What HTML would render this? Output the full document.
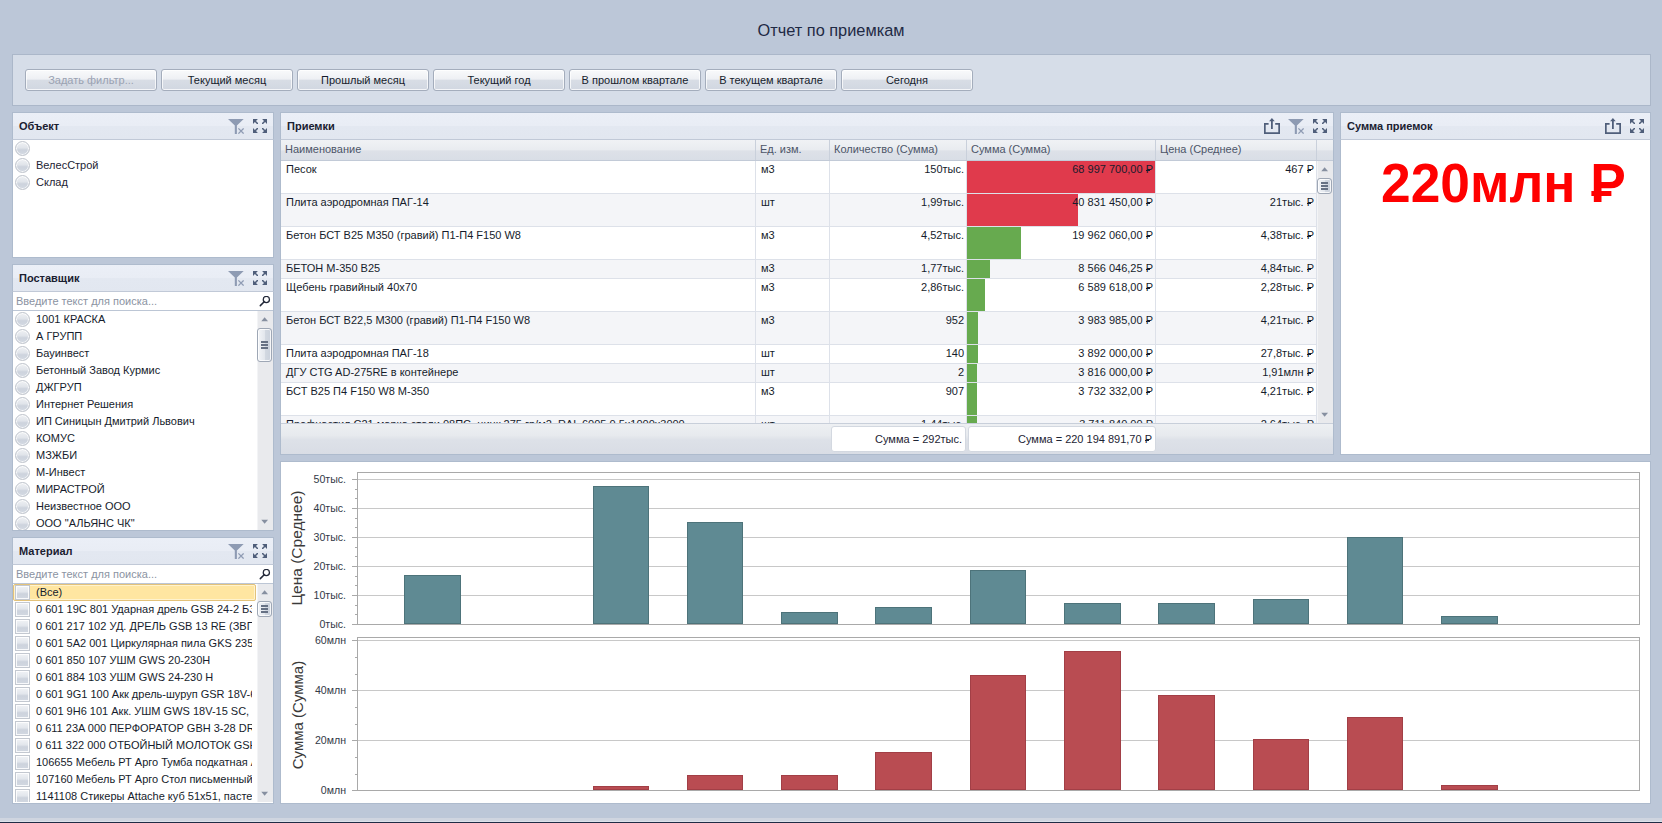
<!DOCTYPE html><html><head><meta charset="utf-8"><style>
*{margin:0;padding:0}
html,body{width:1662px;height:823px;overflow:hidden;background:#bcc7d8;font-family:"Liberation Sans", sans-serif}
body>div,body>svg,.clip>div,.clip>svg{position:absolute}
.clip{overflow:hidden}
.t{white-space:nowrap}
.btn{box-sizing:border-box;border:1px solid #a4adbc;border-radius:3px;box-shadow:inset 0 0 0 1px rgba(255,255,255,.75);background:linear-gradient(#f9fafb 0%,#eef0f4 45%,#d8dde5 52%,#d1d7e1 100%)}
.w{box-sizing:border-box;border:1px solid #aebbcd;background:#fff}
.wh{box-sizing:border-box;border:1px solid #aebbcd;border-bottom:1px solid #c1c9d7;background:linear-gradient(#ebeff7 0%,#e9edf5 48%,#e3e8f1 52%,#e2e7f0 100%)}
.rad{width:15px;height:15px;box-sizing:border-box;border-radius:50%;border:1px solid #bfc4cc;box-shadow:inset 0 0 0 1px rgba(255,255,255,.8);background:linear-gradient(#eff1f4 0%,#e0e4ea 45%,#cdd3dd 60%,#d3d9e2 100%)}
.chk{width:15px;height:15px;box-sizing:border-box;border:1px solid #c3c8d0;box-shadow:inset 0 0 0 1px rgba(255,255,255,.85);background:linear-gradient(#f1f3f6 0%,#e2e6ec 45%,#cdd3dd 60%,#d2d8e1 100%)}
.thumb{width:15px;box-sizing:border-box;border:1px solid #9ea7b5;border-radius:3px;box-shadow:inset 0 0 0 1px rgba(255,255,255,.8);background:linear-gradient(90deg,#f3f5f8 0%,#e3e7ed 50%,#d2d8e1 56%,#cad1dc 100%)}
.gh{background:linear-gradient(#f0f2f5 0%,#e9ecf0 48%,#dde1e8 55%,#d9dee6 100%)}
.gf{background:linear-gradient(#eef0f3 0%,#e7eaee 40%,#dde1e8 55%,#d9dde5 100%)}
.rub{position:relative;display:inline-block}
.rub::after{content:'';position:absolute;left:0.02em;width:0.42em;top:0.6em;height:0.09em;background:currentColor}
.rubb::after{top:0.655em;width:0.38em;height:0.09em}
.tot{box-sizing:border-box;border:1px solid #d3d8e0;border-radius:3px;background:#fff}
</style></head><body>
<div style="left:0px;top:818px;width:1662px;height:3px;background:#cfd5e0"></div>
<div style="left:0px;top:821px;width:1662px;height:1px;background:#dde2ea"></div>
<div style="left:0px;top:822px;width:1662px;height:1px;background:#1f2b45"></div>
<div class="t" style="left:531px;width:600px;text-align:center;top:22.16px;font-size:16.35px;line-height:16.35px;color:#1f2a44;font-weight:400;">Отчет по приемкам</div>
<div style="left:12px;top:54px;width:1639px;height:52px;background:#d6dde8;box-sizing:border-box;border:1px solid #abb7c9"></div>
<div class="btn" style="left:25px;top:69px;width:132px;height:22px"></div>
<div class="t" style="left:-209px;width:600px;text-align:center;top:74.69px;font-size:11px;line-height:11px;color:#9aa2b2;font-weight:400;">Задать фильтр...</div>
<div class="btn" style="left:161px;top:69px;width:132px;height:22px"></div>
<div class="t" style="left:-73px;width:600px;text-align:center;top:74.69px;font-size:11px;line-height:11px;color:#161c2c;font-weight:400;">Текущий месяц</div>
<div class="btn" style="left:297px;top:69px;width:132px;height:22px"></div>
<div class="t" style="left:63px;width:600px;text-align:center;top:74.69px;font-size:11px;line-height:11px;color:#161c2c;font-weight:400;">Прошлый месяц</div>
<div class="btn" style="left:433px;top:69px;width:132px;height:22px"></div>
<div class="t" style="left:199px;width:600px;text-align:center;top:74.69px;font-size:11px;line-height:11px;color:#161c2c;font-weight:400;">Текущий год</div>
<div class="btn" style="left:569px;top:69px;width:132px;height:22px"></div>
<div class="t" style="left:335px;width:600px;text-align:center;top:74.69px;font-size:11px;line-height:11px;color:#161c2c;font-weight:400;">В прошлом квартале</div>
<div class="btn" style="left:705px;top:69px;width:132px;height:22px"></div>
<div class="t" style="left:471px;width:600px;text-align:center;top:74.69px;font-size:11px;line-height:11px;color:#161c2c;font-weight:400;">В текущем квартале</div>
<div class="btn" style="left:841px;top:69px;width:132px;height:22px"></div>
<div class="t" style="left:607px;width:600px;text-align:center;top:74.69px;font-size:11px;line-height:11px;color:#161c2c;font-weight:400;">Сегодня</div>
<div class="w" style="left:12px;top:112px;width:262px;height:146px"></div>
<div class="wh" style="left:12px;top:112px;width:262px;height:28px"></div>
<div class="t" style="left:19px;top:120.69px;font-size:11px;line-height:11px;color:#1a2030;font-weight:700;">Объект</div>
<svg style="left:228px;top:119px" width="16" height="15" viewBox="0 0 16 15"><path d="M0 0H15.7L8.9 6.6V15H6.8V6.6Z" fill="#8e9bb3"/><path d="M10.4 9.4L15.6 14.6M15.6 9.4L10.4 14.6" stroke="#8e9bb3" stroke-width="1.3"/></svg>
<svg style="left:253px;top:119px" width="14" height="14" viewBox="0 0 14 14"><path d="M0 0H4.9L3.0 1.9L5 3.9V5H3.9L1.9 3.0L0 4.9Z" fill="#4f5e7a"/><path d="M0 0H4.9L3.0 1.9L5 3.9V5H3.9L1.9 3.0L0 4.9Z" fill="#4f5e7a" transform="translate(14 0) scale(-1 1)"/><path d="M0 0H4.9L3.0 1.9L5 3.9V5H3.9L1.9 3.0L0 4.9Z" fill="#4f5e7a" transform="translate(0 14) scale(1 -1)"/><path d="M0 0H4.9L3.0 1.9L5 3.9V5H3.9L1.9 3.0L0 4.9Z" fill="#4f5e7a" transform="translate(14 14) scale(-1 -1)"/></svg>
<div class="rad" style="left:15.0px;top:141.0px"></div>
<div class="rad" style="left:15.0px;top:158.0px"></div>
<div class="t" style="left:36px;top:159.69px;font-size:11px;line-height:11px;color:#1d2434;font-weight:400;">ВелесСтрой</div>
<div class="rad" style="left:15.0px;top:175.0px"></div>
<div class="t" style="left:36px;top:176.69px;font-size:11px;line-height:11px;color:#1d2434;font-weight:400;">Склад</div>
<div class="w" style="left:12px;top:264px;width:262px;height:267px"></div>
<div class="wh" style="left:12px;top:264px;width:262px;height:28px"></div>
<div class="t" style="left:19px;top:272.69px;font-size:11px;line-height:11px;color:#1a2030;font-weight:700;">Поставщик</div>
<svg style="left:228px;top:271px" width="16" height="15" viewBox="0 0 16 15"><path d="M0 0H15.7L8.9 6.6V15H6.8V6.6Z" fill="#8e9bb3"/><path d="M10.4 9.4L15.6 14.6M15.6 9.4L10.4 14.6" stroke="#8e9bb3" stroke-width="1.3"/></svg>
<svg style="left:253px;top:271px" width="14" height="14" viewBox="0 0 14 14"><path d="M0 0H4.9L3.0 1.9L5 3.9V5H3.9L1.9 3.0L0 4.9Z" fill="#4f5e7a"/><path d="M0 0H4.9L3.0 1.9L5 3.9V5H3.9L1.9 3.0L0 4.9Z" fill="#4f5e7a" transform="translate(14 0) scale(-1 1)"/><path d="M0 0H4.9L3.0 1.9L5 3.9V5H3.9L1.9 3.0L0 4.9Z" fill="#4f5e7a" transform="translate(0 14) scale(1 -1)"/><path d="M0 0H4.9L3.0 1.9L5 3.9V5H3.9L1.9 3.0L0 4.9Z" fill="#4f5e7a" transform="translate(14 14) scale(-1 -1)"/></svg>
<div class="t" style="left:16px;top:295.69px;font-size:11px;line-height:11px;color:#8b93a2;font-weight:400;">Введите текст для поиска...</div>
<svg style="left:259px;top:296px" width="12" height="12" viewBox="0 0 12 12"><circle cx="7.35" cy="3.5" r="3.1" fill="none" stroke="#222838" stroke-width="1.25"/><path d="M5.2 5.7L1.3 9.6" stroke="#222838" stroke-width="1.5" stroke-linecap="round"/></svg>
<div style="left:13px;top:310px;width:260px;height:1px;background:#bcc6d5"></div>
<div class="clip" style="left:13px;top:311px;width:244px;height:219px">
<div class="rad" style="left:2px;top:1px"></div>
<div class="t" style="left:23px;top:2.69px;font-size:11px;line-height:11px;color:#161c2c">1001 КРАСКА</div>
<div class="rad" style="left:2px;top:18px"></div>
<div class="t" style="left:23px;top:19.69px;font-size:11px;line-height:11px;color:#161c2c">А ГРУПП</div>
<div class="rad" style="left:2px;top:35px"></div>
<div class="t" style="left:23px;top:36.69px;font-size:11px;line-height:11px;color:#161c2c">Бауинвест</div>
<div class="rad" style="left:2px;top:52px"></div>
<div class="t" style="left:23px;top:53.69px;font-size:11px;line-height:11px;color:#161c2c">Бетонный Завод Курмис</div>
<div class="rad" style="left:2px;top:69px"></div>
<div class="t" style="left:23px;top:70.69px;font-size:11px;line-height:11px;color:#161c2c">ДЖГРУП</div>
<div class="rad" style="left:2px;top:86px"></div>
<div class="t" style="left:23px;top:87.69px;font-size:11px;line-height:11px;color:#161c2c">Интернет Решения</div>
<div class="rad" style="left:2px;top:103px"></div>
<div class="t" style="left:23px;top:104.69px;font-size:11px;line-height:11px;color:#161c2c">ИП Синицын Дмитрий Львович</div>
<div class="rad" style="left:2px;top:120px"></div>
<div class="t" style="left:23px;top:121.69px;font-size:11px;line-height:11px;color:#161c2c">КОМУС</div>
<div class="rad" style="left:2px;top:137px"></div>
<div class="t" style="left:23px;top:138.69px;font-size:11px;line-height:11px;color:#161c2c">МЗЖБИ</div>
<div class="rad" style="left:2px;top:154px"></div>
<div class="t" style="left:23px;top:155.69px;font-size:11px;line-height:11px;color:#161c2c">М-Инвест</div>
<div class="rad" style="left:2px;top:171px"></div>
<div class="t" style="left:23px;top:172.69px;font-size:11px;line-height:11px;color:#161c2c">МИРАСТРОЙ</div>
<div class="rad" style="left:2px;top:188px"></div>
<div class="t" style="left:23px;top:189.69px;font-size:11px;line-height:11px;color:#161c2c">Неизвестное ООО</div>
<div class="rad" style="left:2px;top:205px"></div>
<div class="t" style="left:23px;top:206.69px;font-size:11px;line-height:11px;color:#161c2c">ООО &quot;АЛЬЯНС ЧК&quot;</div>
</div>
<div style="left:257px;top:311px;width:16px;height:219px;background:#e9eaed;box-shadow:inset 1px 0 0 #f3f4f6"></div>
<svg style="left:257px;top:311px" width="16" height="219" viewBox="0 0 16 219"><path d="M4.3 10.2H11L7.65 6.2Z" fill="#868fa0"/><path d="M4.3 208.8H11L7.65 212.8Z" fill="#868fa0"/></svg>
<div class="thumb" style="left:257px;top:328px;height:34px"></div>
<div style="left:261px;top:341.0px;width:7px;height:1.5px;background:#667184"></div>
<div style="left:261px;top:344.0px;width:7px;height:1.5px;background:#667184"></div>
<div style="left:261px;top:347.0px;width:7px;height:1.5px;background:#667184"></div>
<div class="w" style="left:12px;top:537px;width:262px;height:267px"></div>
<div class="wh" style="left:12px;top:537px;width:262px;height:28px"></div>
<div class="t" style="left:19px;top:545.69px;font-size:11px;line-height:11px;color:#1a2030;font-weight:700;">Материал</div>
<svg style="left:228px;top:544px" width="16" height="15" viewBox="0 0 16 15"><path d="M0 0H15.7L8.9 6.6V15H6.8V6.6Z" fill="#8e9bb3"/><path d="M10.4 9.4L15.6 14.6M15.6 9.4L10.4 14.6" stroke="#8e9bb3" stroke-width="1.3"/></svg>
<svg style="left:253px;top:544px" width="14" height="14" viewBox="0 0 14 14"><path d="M0 0H4.9L3.0 1.9L5 3.9V5H3.9L1.9 3.0L0 4.9Z" fill="#4f5e7a"/><path d="M0 0H4.9L3.0 1.9L5 3.9V5H3.9L1.9 3.0L0 4.9Z" fill="#4f5e7a" transform="translate(14 0) scale(-1 1)"/><path d="M0 0H4.9L3.0 1.9L5 3.9V5H3.9L1.9 3.0L0 4.9Z" fill="#4f5e7a" transform="translate(0 14) scale(1 -1)"/><path d="M0 0H4.9L3.0 1.9L5 3.9V5H3.9L1.9 3.0L0 4.9Z" fill="#4f5e7a" transform="translate(14 14) scale(-1 -1)"/></svg>
<div class="t" style="left:16px;top:568.69px;font-size:11px;line-height:11px;color:#8b93a2;font-weight:400;">Введите текст для поиска...</div>
<svg style="left:259px;top:569px" width="12" height="12" viewBox="0 0 12 12"><circle cx="7.35" cy="3.5" r="3.1" fill="none" stroke="#222838" stroke-width="1.25"/><path d="M5.2 5.7L1.3 9.6" stroke="#222838" stroke-width="1.5" stroke-linecap="round"/></svg>
<div style="left:13px;top:583px;width:260px;height:1px;background:#bcc6d5"></div>
<div class="clip" style="left:13px;top:584px;width:244px;height:218px">
<div style="left:0px;top:0px;width:243px;height:17px;background:#ffe6a1;box-sizing:border-box;border:1px solid #e3c27a;border-radius:2px;box-shadow:inset 0 0 0 1px rgba(255,248,225,.7)"></div>
<div class="clip" style="left:0;top:0;width:239px;height:218px">
<div class="chk" style="left:2px;top:1px"></div>
<div class="t" style="left:23px;top:2.69px;font-size:11px;line-height:11px;color:#161c2c">(Все)</div>
<div class="chk" style="left:2px;top:18px"></div>
<div class="t" style="left:23px;top:19.69px;font-size:11px;line-height:11px;color:#161c2c">0 601 19C 801 Ударная дрель GSB 24-2 БЗП</div>
<div class="chk" style="left:2px;top:35px"></div>
<div class="t" style="left:23px;top:36.69px;font-size:11px;line-height:11px;color:#161c2c">0 601 217 102 УД. ДРЕЛЬ GSB 13 RE (ЗВП)</div>
<div class="chk" style="left:2px;top:52px"></div>
<div class="t" style="left:23px;top:53.69px;font-size:11px;line-height:11px;color:#161c2c">0 601 5A2 001 Циркулярная пила GKS 235 Turbo</div>
<div class="chk" style="left:2px;top:69px"></div>
<div class="t" style="left:23px;top:70.69px;font-size:11px;line-height:11px;color:#161c2c">0 601 850 107 УШМ GWS 20-230H</div>
<div class="chk" style="left:2px;top:86px"></div>
<div class="t" style="left:23px;top:87.69px;font-size:11px;line-height:11px;color:#161c2c">0 601 884 103 УШМ GWS 24-230 H</div>
<div class="chk" style="left:2px;top:103px"></div>
<div class="t" style="left:23px;top:104.69px;font-size:11px;line-height:11px;color:#161c2c">0 601 9G1 100 Акк дрель-шуруп GSR 18V-60</div>
<div class="chk" style="left:2px;top:120px"></div>
<div class="t" style="left:23px;top:121.69px;font-size:11px;line-height:11px;color:#161c2c">0 601 9H6 101 Акк. УШМ GWS 18V-15 SC, 2</div>
<div class="chk" style="left:2px;top:137px"></div>
<div class="t" style="left:23px;top:138.69px;font-size:11px;line-height:11px;color:#161c2c">0 611 23A 000 ПЕРФОРАТОР GBH 3-28 DRE</div>
<div class="chk" style="left:2px;top:154px"></div>
<div class="t" style="left:23px;top:155.69px;font-size:11px;line-height:11px;color:#161c2c">0 611 322 000 ОТБОЙНЫЙ МОЛОТОК GSH 5</div>
<div class="chk" style="left:2px;top:171px"></div>
<div class="t" style="left:23px;top:172.69px;font-size:11px;line-height:11px;color:#161c2c">106655 Мебель РТ Арго Тумба подкатная А</div>
<div class="chk" style="left:2px;top:188px"></div>
<div class="t" style="left:23px;top:189.69px;font-size:11px;line-height:11px;color:#161c2c">107160 Мебель РТ Арго Стол письменный</div>
<div class="chk" style="left:2px;top:205px"></div>
<div class="t" style="left:23px;top:206.69px;font-size:11px;line-height:11px;color:#161c2c">1141108 Стикеры Attache куб 51х51, пастель</div>
</div></div>
<div style="left:257px;top:584px;width:16px;height:218px;background:#e9eaed;box-shadow:inset 1px 0 0 #f3f4f6"></div>
<svg style="left:257px;top:584px" width="16" height="218" viewBox="0 0 16 218"><path d="M4.3 10.2H11L7.65 6.2Z" fill="#868fa0"/><path d="M4.3 207.8H11L7.65 211.8Z" fill="#868fa0"/></svg>
<div class="thumb" style="left:257px;top:601px;height:16px"></div>
<div style="left:261px;top:605.0px;width:7px;height:1.5px;background:#667184"></div>
<div style="left:261px;top:608.0px;width:7px;height:1.5px;background:#667184"></div>
<div style="left:261px;top:611.0px;width:7px;height:1.5px;background:#667184"></div>
<div class="w" style="left:280px;top:112px;width:1054px;height:343px"></div>
<div class="wh" style="left:280px;top:112px;width:1054px;height:28px"></div>
<div class="t" style="left:287px;top:120.69px;font-size:11px;line-height:11px;color:#1a2030;font-weight:700;">Приемки</div>
<svg style="left:1264px;top:118px" width="16" height="16" viewBox="0 0 16 16"><path d="M4.6 5.95H0.85V15.05H15.15V5.95H11.2" fill="none" stroke="#4f5e7a" stroke-width="1.7"/><path d="M7.9 11V3" stroke="#4f5e7a" stroke-width="1.8"/><path d="M5.1 3.2L7.9 0.1L10.7 3.2Z" fill="#4f5e7a"/></svg>
<svg style="left:1288px;top:119px" width="16" height="15" viewBox="0 0 16 15"><path d="M0 0H15.7L8.9 6.6V15H6.8V6.6Z" fill="#8e9bb3"/><path d="M10.4 9.4L15.6 14.6M15.6 9.4L10.4 14.6" stroke="#8e9bb3" stroke-width="1.3"/></svg>
<svg style="left:1313px;top:119px" width="14" height="14" viewBox="0 0 14 14"><path d="M0 0H4.9L3.0 1.9L5 3.9V5H3.9L1.9 3.0L0 4.9Z" fill="#4f5e7a"/><path d="M0 0H4.9L3.0 1.9L5 3.9V5H3.9L1.9 3.0L0 4.9Z" fill="#4f5e7a" transform="translate(14 0) scale(-1 1)"/><path d="M0 0H4.9L3.0 1.9L5 3.9V5H3.9L1.9 3.0L0 4.9Z" fill="#4f5e7a" transform="translate(0 14) scale(1 -1)"/><path d="M0 0H4.9L3.0 1.9L5 3.9V5H3.9L1.9 3.0L0 4.9Z" fill="#4f5e7a" transform="translate(14 14) scale(-1 -1)"/></svg>
<div class="gh" style="left:281px;top:140px;width:1052px;height:20px"></div>
<div class="t" style="left:285px;top:143.69px;font-size:11px;line-height:11px;color:#4c5568;font-weight:400;">Наименование</div>
<div class="t" style="left:760px;top:143.69px;font-size:11px;line-height:11px;color:#4c5568;font-weight:400;">Ед. изм.</div>
<div class="t" style="left:834px;top:143.69px;font-size:11px;line-height:11px;color:#4c5568;font-weight:400;">Количество (Сумма)</div>
<div class="t" style="left:971px;top:143.69px;font-size:11px;line-height:11px;color:#4c5568;font-weight:400;">Сумма (Сумма)</div>
<div class="t" style="left:1160px;top:143.69px;font-size:11px;line-height:11px;color:#4c5568;font-weight:400;">Цена (Среднее)</div>
<div class="clip" style="left:281px;top:160px;width:1036px;height:263px">
<div style="left:0px;top:33px;width:1035px;height:1px;background:#dde1e9"></div>
<div style="left:686px;top:1px;width:188px;height:32px;background:#e03a4c"></div>
<div class="t" style="left:5px;top:3.69px;font-size:11px;line-height:11px;color:#161c2c">Песок</div>
<div class="t" style="left:480px;top:3.69px;font-size:11px;line-height:11px;color:#161c2c">м3</div>
<div class="t" style="right:353px;top:3.69px;font-size:11px;line-height:11px;color:#161c2c">150тыс.</div>
<div class="t" style="right:164px;top:3.69px;font-size:11px;line-height:11px;color:#161c2c">68 997 700,00 <span class="rub">Р</span></div>
<div class="t" style="right:3px;top:3.69px;font-size:11px;line-height:11px;color:#161c2c">467 <span class="rub">Р</span></div>
<div style="left:0px;top:34px;width:1035px;height:33px;background:#f4f5f8"></div>
<div style="left:0px;top:66px;width:1035px;height:1px;background:#dde1e9"></div>
<div style="left:686px;top:34px;width:111px;height:32px;background:#e03a4c"></div>
<div class="t" style="left:5px;top:36.69px;font-size:11px;line-height:11px;color:#161c2c">Плита аэродромная ПАГ-14</div>
<div class="t" style="left:480px;top:36.69px;font-size:11px;line-height:11px;color:#161c2c">шт</div>
<div class="t" style="right:353px;top:36.69px;font-size:11px;line-height:11px;color:#161c2c">1,99тыс.</div>
<div class="t" style="right:164px;top:36.69px;font-size:11px;line-height:11px;color:#161c2c">40 831 450,00 <span class="rub">Р</span></div>
<div class="t" style="right:3px;top:36.69px;font-size:11px;line-height:11px;color:#161c2c">21тыс. <span class="rub">Р</span></div>
<div style="left:0px;top:99px;width:1035px;height:1px;background:#dde1e9"></div>
<div style="left:686px;top:67px;width:54px;height:32px;background:#67aa4f"></div>
<div class="t" style="left:5px;top:69.69px;font-size:11px;line-height:11px;color:#161c2c">Бетон БСТ В25 М350 (гравий) П1-П4 F150 W8</div>
<div class="t" style="left:480px;top:69.69px;font-size:11px;line-height:11px;color:#161c2c">м3</div>
<div class="t" style="right:353px;top:69.69px;font-size:11px;line-height:11px;color:#161c2c">4,52тыс.</div>
<div class="t" style="right:164px;top:69.69px;font-size:11px;line-height:11px;color:#161c2c">19 962 060,00 <span class="rub">Р</span></div>
<div class="t" style="right:3px;top:69.69px;font-size:11px;line-height:11px;color:#161c2c">4,38тыс. <span class="rub">Р</span></div>
<div style="left:0px;top:100px;width:1035px;height:19px;background:#f4f5f8"></div>
<div style="left:0px;top:118px;width:1035px;height:1px;background:#dde1e9"></div>
<div style="left:686px;top:100px;width:23px;height:18px;background:#67aa4f"></div>
<div class="t" style="left:5px;top:102.69px;font-size:11px;line-height:11px;color:#161c2c">БЕТОН М-350 В25</div>
<div class="t" style="left:480px;top:102.69px;font-size:11px;line-height:11px;color:#161c2c">м3</div>
<div class="t" style="right:353px;top:102.69px;font-size:11px;line-height:11px;color:#161c2c">1,77тыс.</div>
<div class="t" style="right:164px;top:102.69px;font-size:11px;line-height:11px;color:#161c2c">8 566 046,25 <span class="rub">Р</span></div>
<div class="t" style="right:3px;top:102.69px;font-size:11px;line-height:11px;color:#161c2c">4,84тыс. <span class="rub">Р</span></div>
<div style="left:0px;top:151px;width:1035px;height:1px;background:#dde1e9"></div>
<div style="left:686px;top:119px;width:18px;height:32px;background:#67aa4f"></div>
<div class="t" style="left:5px;top:121.69px;font-size:11px;line-height:11px;color:#161c2c">Щебень гравийный 40х70</div>
<div class="t" style="left:480px;top:121.69px;font-size:11px;line-height:11px;color:#161c2c">м3</div>
<div class="t" style="right:353px;top:121.69px;font-size:11px;line-height:11px;color:#161c2c">2,86тыс.</div>
<div class="t" style="right:164px;top:121.69px;font-size:11px;line-height:11px;color:#161c2c">6 589 618,00 <span class="rub">Р</span></div>
<div class="t" style="right:3px;top:121.69px;font-size:11px;line-height:11px;color:#161c2c">2,28тыс. <span class="rub">Р</span></div>
<div style="left:0px;top:152px;width:1035px;height:33px;background:#f4f5f8"></div>
<div style="left:0px;top:184px;width:1035px;height:1px;background:#dde1e9"></div>
<div style="left:686px;top:152px;width:11px;height:32px;background:#67aa4f"></div>
<div class="t" style="left:5px;top:154.69px;font-size:11px;line-height:11px;color:#161c2c">Бетон БСТ В22,5 М300 (гравий) П1-П4 F150 W8</div>
<div class="t" style="left:480px;top:154.69px;font-size:11px;line-height:11px;color:#161c2c">м3</div>
<div class="t" style="right:353px;top:154.69px;font-size:11px;line-height:11px;color:#161c2c">952</div>
<div class="t" style="right:164px;top:154.69px;font-size:11px;line-height:11px;color:#161c2c">3 983 985,00 <span class="rub">Р</span></div>
<div class="t" style="right:3px;top:154.69px;font-size:11px;line-height:11px;color:#161c2c">4,21тыс. <span class="rub">Р</span></div>
<div style="left:0px;top:203px;width:1035px;height:1px;background:#dde1e9"></div>
<div style="left:686px;top:185px;width:11px;height:18px;background:#67aa4f"></div>
<div class="t" style="left:5px;top:187.69px;font-size:11px;line-height:11px;color:#161c2c">Плита аэродромная ПАГ-18</div>
<div class="t" style="left:480px;top:187.69px;font-size:11px;line-height:11px;color:#161c2c">шт</div>
<div class="t" style="right:353px;top:187.69px;font-size:11px;line-height:11px;color:#161c2c">140</div>
<div class="t" style="right:164px;top:187.69px;font-size:11px;line-height:11px;color:#161c2c">3 892 000,00 <span class="rub">Р</span></div>
<div class="t" style="right:3px;top:187.69px;font-size:11px;line-height:11px;color:#161c2c">27,8тыс. <span class="rub">Р</span></div>
<div style="left:0px;top:204px;width:1035px;height:19px;background:#f4f5f8"></div>
<div style="left:0px;top:222px;width:1035px;height:1px;background:#dde1e9"></div>
<div style="left:686px;top:204px;width:10px;height:18px;background:#67aa4f"></div>
<div class="t" style="left:5px;top:206.69px;font-size:11px;line-height:11px;color:#161c2c">ДГУ CTG AD-275RE в контейнере</div>
<div class="t" style="left:480px;top:206.69px;font-size:11px;line-height:11px;color:#161c2c">шт</div>
<div class="t" style="right:353px;top:206.69px;font-size:11px;line-height:11px;color:#161c2c">2</div>
<div class="t" style="right:164px;top:206.69px;font-size:11px;line-height:11px;color:#161c2c">3 816 000,00 <span class="rub">Р</span></div>
<div class="t" style="right:3px;top:206.69px;font-size:11px;line-height:11px;color:#161c2c">1,91млн <span class="rub">Р</span></div>
<div style="left:0px;top:255px;width:1035px;height:1px;background:#dde1e9"></div>
<div style="left:686px;top:223px;width:10px;height:32px;background:#67aa4f"></div>
<div class="t" style="left:5px;top:225.69px;font-size:11px;line-height:11px;color:#161c2c">БСТ В25 П4 F150 W8 М-350</div>
<div class="t" style="left:480px;top:225.69px;font-size:11px;line-height:11px;color:#161c2c">м3</div>
<div class="t" style="right:353px;top:225.69px;font-size:11px;line-height:11px;color:#161c2c">907</div>
<div class="t" style="right:164px;top:225.69px;font-size:11px;line-height:11px;color:#161c2c">3 732 332,00 <span class="rub">Р</span></div>
<div class="t" style="right:3px;top:225.69px;font-size:11px;line-height:11px;color:#161c2c">4,21тыс. <span class="rub">Р</span></div>
<div style="left:0px;top:256px;width:1035px;height:33px;background:#f4f5f8"></div>
<div style="left:0px;top:288px;width:1035px;height:1px;background:#dde1e9"></div>
<div style="left:686px;top:256px;width:10px;height:32px;background:#67aa4f"></div>
<div class="t" style="left:5px;top:258.69px;font-size:11px;line-height:11px;color:#161c2c">Профнастил С21 марка стали 08ПС, цинк 275 гр/м2, RAL 6005 0,5х1000х3000</div>
<div class="t" style="left:480px;top:258.69px;font-size:11px;line-height:11px;color:#161c2c">шт</div>
<div class="t" style="right:353px;top:258.69px;font-size:11px;line-height:11px;color:#161c2c">1,44тыс.</div>
<div class="t" style="right:164px;top:258.69px;font-size:11px;line-height:11px;color:#161c2c">3 711 840,00 <span class="rub">Р</span></div>
<div class="t" style="right:3px;top:258.69px;font-size:11px;line-height:11px;color:#161c2c">2,64тыс. <span class="rub">Р</span></div>
<div style="left:474px;top:0px;width:1px;height:263px;background:#dde1e9"></div>
<div style="left:548px;top:0px;width:1px;height:263px;background:#dde1e9"></div>
<div style="left:685px;top:0px;width:1px;height:263px;background:#dde1e9"></div>
<div style="left:874px;top:0px;width:1px;height:263px;background:#dde1e9"></div>
<div style="left:1035px;top:0px;width:1px;height:263px;background:#dde1e9"></div>
</div>
<div style="left:755px;top:140px;width:1px;height:20px;background:#c9d0db"></div>
<div style="left:829px;top:140px;width:1px;height:20px;background:#c9d0db"></div>
<div style="left:966px;top:140px;width:1px;height:20px;background:#c9d0db"></div>
<div style="left:1155px;top:140px;width:1px;height:20px;background:#c9d0db"></div>
<div style="left:1316px;top:140px;width:1px;height:20px;background:#c9d0db"></div>
<div style="left:281px;top:160px;width:1052px;height:1px;background:#c2cad7"></div>
<div style="left:1317px;top:161px;width:16px;height:262px;background:#e9eaed;box-shadow:inset 1px 0 0 #f3f4f6"></div>
<svg style="left:1317px;top:161px" width="16" height="262" viewBox="0 0 16 262"><path d="M4.3 10.2H11L7.65 6.2Z" fill="#868fa0"/><path d="M4.3 251.8H11L7.65 255.8Z" fill="#868fa0"/></svg>
<div class="thumb" style="left:1317px;top:178px;height:16px"></div>
<div style="left:1321px;top:182.0px;width:7px;height:1.5px;background:#667184"></div>
<div style="left:1321px;top:185.0px;width:7px;height:1.5px;background:#667184"></div>
<div style="left:1321px;top:188.0px;width:7px;height:1.5px;background:#667184"></div>
<div class="gf" style="left:281px;top:423px;width:1052px;height:31px"></div>
<div style="left:281px;top:423px;width:1052px;height:1px;background:#c8cfda"></div>
<div class="tot" style="left:831px;top:426px;width:135px;height:26px"></div>
<div class="tot" style="left:968px;top:426px;width:188px;height:26px"></div>
<div class="t" style="right:700px;top:433.69px;font-size:11px;line-height:11px;color:#1d2434;font-weight:400;">Сумма = 292тыс.</div>
<div class="t" style="right:510px;top:433.69px;font-size:11px;line-height:11px;color:#1d2434;font-weight:400;">Сумма = 220 194 891,70 <span class="rub">Р</span></div>
<div class="w" style="left:1340px;top:112px;width:311px;height:343px"></div>
<div class="wh" style="left:1340px;top:112px;width:311px;height:28px"></div>
<div class="t" style="left:1347px;top:120.69px;font-size:11px;line-height:11px;color:#1a2030;font-weight:700;">Сумма приемок</div>
<svg style="left:1605px;top:118px" width="16" height="16" viewBox="0 0 16 16"><path d="M4.6 5.95H0.85V15.05H15.15V5.95H11.2" fill="none" stroke="#4f5e7a" stroke-width="1.7"/><path d="M7.9 11V3" stroke="#4f5e7a" stroke-width="1.8"/><path d="M5.1 3.2L7.9 0.1L10.7 3.2Z" fill="#4f5e7a"/></svg>
<svg style="left:1630px;top:119px" width="14" height="14" viewBox="0 0 14 14"><path d="M0 0H4.9L3.0 1.9L5 3.9V5H3.9L1.9 3.0L0 4.9Z" fill="#4f5e7a"/><path d="M0 0H4.9L3.0 1.9L5 3.9V5H3.9L1.9 3.0L0 4.9Z" fill="#4f5e7a" transform="translate(14 0) scale(-1 1)"/><path d="M0 0H4.9L3.0 1.9L5 3.9V5H3.9L1.9 3.0L0 4.9Z" fill="#4f5e7a" transform="translate(0 14) scale(1 -1)"/><path d="M0 0H4.9L3.0 1.9L5 3.9V5H3.9L1.9 3.0L0 4.9Z" fill="#4f5e7a" transform="translate(14 14) scale(-1 -1)"/></svg>
<div class="t" style="left:1380.5px;top:154.6px;font-size:56px;line-height:56px;color:#ff0000;font-weight:700;transform-origin:0 0;transform:scaleX(0.952)">220млн <span class="rub rubb">Р</span></div>
<div class="w" style="left:280px;top:461px;width:1371px;height:343px;background:#fff"></div>
<svg style="left:281px;top:462px" width="1370" height="342" viewBox="281 462 1370 342">
<line x1="358" x2="1639" y1="624.5" y2="624.5" stroke="#c8c8c8" stroke-width="1"/>
<line x1="352" x2="358" y1="624.5" y2="624.5" stroke="#a9a9a9" stroke-width="1"/>
<line x1="358" x2="1639" y1="595.5" y2="595.5" stroke="#c8c8c8" stroke-width="1"/>
<line x1="352" x2="358" y1="595.5" y2="595.5" stroke="#a9a9a9" stroke-width="1"/>
<line x1="358" x2="1639" y1="566.5" y2="566.5" stroke="#c8c8c8" stroke-width="1"/>
<line x1="352" x2="358" y1="566.5" y2="566.5" stroke="#a9a9a9" stroke-width="1"/>
<line x1="358" x2="1639" y1="537.5" y2="537.5" stroke="#c8c8c8" stroke-width="1"/>
<line x1="352" x2="358" y1="537.5" y2="537.5" stroke="#a9a9a9" stroke-width="1"/>
<line x1="358" x2="1639" y1="508.5" y2="508.5" stroke="#c8c8c8" stroke-width="1"/>
<line x1="352" x2="358" y1="508.5" y2="508.5" stroke="#a9a9a9" stroke-width="1"/>
<line x1="358" x2="1639" y1="479.5" y2="479.5" stroke="#c8c8c8" stroke-width="1"/>
<line x1="352" x2="358" y1="479.5" y2="479.5" stroke="#a9a9a9" stroke-width="1"/>
<line x1="355" x2="358" y1="489.5" y2="489.5" stroke="#a9a9a9" stroke-width="1"/>
<line x1="355" x2="358" y1="498.5" y2="498.5" stroke="#a9a9a9" stroke-width="1"/>
<line x1="355" x2="358" y1="518.5" y2="518.5" stroke="#a9a9a9" stroke-width="1"/>
<line x1="355" x2="358" y1="527.5" y2="527.5" stroke="#a9a9a9" stroke-width="1"/>
<line x1="355" x2="358" y1="547.5" y2="547.5" stroke="#a9a9a9" stroke-width="1"/>
<line x1="355" x2="358" y1="556.5" y2="556.5" stroke="#a9a9a9" stroke-width="1"/>
<line x1="355" x2="358" y1="576.5" y2="576.5" stroke="#a9a9a9" stroke-width="1"/>
<line x1="355" x2="358" y1="585.5" y2="585.5" stroke="#a9a9a9" stroke-width="1"/>
<line x1="355" x2="358" y1="605.5" y2="605.5" stroke="#a9a9a9" stroke-width="1"/>
<line x1="355" x2="358" y1="614.5" y2="614.5" stroke="#a9a9a9" stroke-width="1"/>
<rect x="357.5" y="472.5" width="1282" height="152" fill="none" stroke="#a9a9a9" stroke-width="1"/>
<rect x="404.5" y="575.5" width="56" height="48" fill="#5f8a93" stroke="#4d737a" stroke-width="1"/>
<rect x="593.5" y="486.5" width="55" height="137" fill="#5f8a93" stroke="#4d737a" stroke-width="1"/>
<rect x="687.5" y="522.5" width="55" height="101" fill="#5f8a93" stroke="#4d737a" stroke-width="1"/>
<rect x="781.5" y="612.5" width="56" height="11" fill="#5f8a93" stroke="#4d737a" stroke-width="1"/>
<rect x="875.5" y="607.5" width="56" height="16" fill="#5f8a93" stroke="#4d737a" stroke-width="1"/>
<rect x="970.5" y="570.5" width="55" height="53" fill="#5f8a93" stroke="#4d737a" stroke-width="1"/>
<rect x="1064.5" y="603.5" width="56" height="20" fill="#5f8a93" stroke="#4d737a" stroke-width="1"/>
<rect x="1158.5" y="603.5" width="56" height="20" fill="#5f8a93" stroke="#4d737a" stroke-width="1"/>
<rect x="1253.5" y="599.5" width="55" height="24" fill="#5f8a93" stroke="#4d737a" stroke-width="1"/>
<rect x="1347.5" y="537.5" width="55" height="86" fill="#5f8a93" stroke="#4d737a" stroke-width="1"/>
<rect x="1441.5" y="616.5" width="56" height="7" fill="#5f8a93" stroke="#4d737a" stroke-width="1"/>
<line x1="358" x2="1639" y1="790.5" y2="790.5" stroke="#c8c8c8" stroke-width="1"/>
<line x1="352" x2="358" y1="790.5" y2="790.5" stroke="#a9a9a9" stroke-width="1"/>
<line x1="358" x2="1639" y1="740.5" y2="740.5" stroke="#c8c8c8" stroke-width="1"/>
<line x1="352" x2="358" y1="740.5" y2="740.5" stroke="#a9a9a9" stroke-width="1"/>
<line x1="358" x2="1639" y1="690.5" y2="690.5" stroke="#c8c8c8" stroke-width="1"/>
<line x1="352" x2="358" y1="690.5" y2="690.5" stroke="#a9a9a9" stroke-width="1"/>
<line x1="358" x2="1639" y1="640.5" y2="640.5" stroke="#c8c8c8" stroke-width="1"/>
<line x1="352" x2="358" y1="640.5" y2="640.5" stroke="#a9a9a9" stroke-width="1"/>
<line x1="355" x2="358" y1="657.5" y2="657.5" stroke="#a9a9a9" stroke-width="1"/>
<line x1="355" x2="358" y1="674.5" y2="674.5" stroke="#a9a9a9" stroke-width="1"/>
<line x1="355" x2="358" y1="707.5" y2="707.5" stroke="#a9a9a9" stroke-width="1"/>
<line x1="355" x2="358" y1="724.5" y2="724.5" stroke="#a9a9a9" stroke-width="1"/>
<line x1="355" x2="358" y1="757.5" y2="757.5" stroke="#a9a9a9" stroke-width="1"/>
<line x1="355" x2="358" y1="774.5" y2="774.5" stroke="#a9a9a9" stroke-width="1"/>
<rect x="357.5" y="637.5" width="1282" height="153" fill="none" stroke="#a9a9a9" stroke-width="1"/>
<rect x="593.5" y="786.5" width="55" height="3" fill="#b94c52" stroke="#a23f46" stroke-width="1"/>
<rect x="687.5" y="775.5" width="55" height="14" fill="#b94c52" stroke="#a23f46" stroke-width="1"/>
<rect x="781.5" y="775.5" width="56" height="14" fill="#b94c52" stroke="#a23f46" stroke-width="1"/>
<rect x="875.5" y="752.5" width="56" height="37" fill="#b94c52" stroke="#a23f46" stroke-width="1"/>
<rect x="970.5" y="675.5" width="55" height="114" fill="#b94c52" stroke="#a23f46" stroke-width="1"/>
<rect x="1064.5" y="651.5" width="56" height="138" fill="#b94c52" stroke="#a23f46" stroke-width="1"/>
<rect x="1158.5" y="695.5" width="56" height="94" fill="#b94c52" stroke="#a23f46" stroke-width="1"/>
<rect x="1253.5" y="739.5" width="55" height="50" fill="#b94c52" stroke="#a23f46" stroke-width="1"/>
<rect x="1347.5" y="717.5" width="55" height="72" fill="#b94c52" stroke="#a23f46" stroke-width="1"/>
<rect x="1441.5" y="785.5" width="56" height="4" fill="#b94c52" stroke="#a23f46" stroke-width="1"/>
</svg>
<div class="t" style="right:1316px;top:619.03px;font-size:10.6px;line-height:10.6px;color:#333a48;font-weight:400;">0тыс.</div>
<div class="t" style="right:1316px;top:590.03px;font-size:10.6px;line-height:10.6px;color:#333a48;font-weight:400;">10тыс.</div>
<div class="t" style="right:1316px;top:561.03px;font-size:10.6px;line-height:10.6px;color:#333a48;font-weight:400;">20тыс.</div>
<div class="t" style="right:1316px;top:532.03px;font-size:10.6px;line-height:10.6px;color:#333a48;font-weight:400;">30тыс.</div>
<div class="t" style="right:1316px;top:503.03px;font-size:10.6px;line-height:10.6px;color:#333a48;font-weight:400;">40тыс.</div>
<div class="t" style="right:1316px;top:474.03px;font-size:10.6px;line-height:10.6px;color:#333a48;font-weight:400;">50тыс.</div>
<div class="t" style="right:1316px;top:785.03px;font-size:10.6px;line-height:10.6px;color:#333a48;font-weight:400;">0млн</div>
<div class="t" style="right:1316px;top:735.03px;font-size:10.6px;line-height:10.6px;color:#333a48;font-weight:400;">20млн</div>
<div class="t" style="right:1316px;top:685.03px;font-size:10.6px;line-height:10.6px;color:#333a48;font-weight:400;">40млн</div>
<div class="t" style="right:1316px;top:635.03px;font-size:10.6px;line-height:10.6px;color:#333a48;font-weight:400;">60млн</div>
<div class="t" style="left:297px;top:548px;font-size:15.5px;line-height:16px;color:#3a3a3a;transform:translate(-50%,-50%) rotate(-90deg)">Цена (Среднее)</div>
<div class="t" style="left:298px;top:715px;font-size:15px;line-height:16px;color:#3a3a3a;transform:translate(-50%,-50%) rotate(-90deg)">Сумма (Сумма)</div>
</body></html>
